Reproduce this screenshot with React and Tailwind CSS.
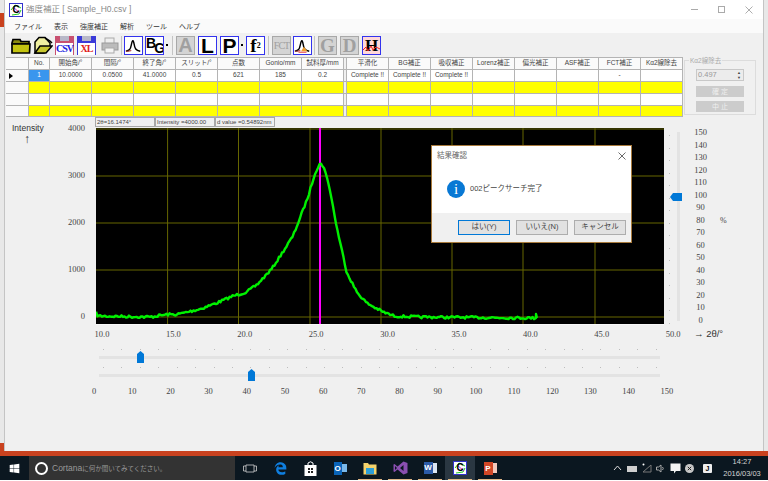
import React from "react";
import { FaWindows, FaEdgeLegacy } from "react-icons/fa";

const sans = "font-['Liberation_Sans','Noto_Sans_CJK_JP',sans-serif]";
const serif = "font-['Liberation_Serif',serif]";

const anchors = [[96,313],[98,316],[150,317],[166.7,314.5],[177,314.5],[200,309],[216.7,303],[233,296],[246.7,292],[256.7,285],[271.7,269],[283,251.7],[293,236],[300,218],[308,197],[315,173],[320,163.5],[324,167],[330,190],[336.7,227],[346.7,272],[356.7,292],[366.7,303],[383,312],[394,316],[417,317],[535,318]];
function curve() {
  const pts = [];
  let seed = 7;
  const rnd = () => { seed = (seed * 16807) % 2147483647; return seed / 2147483647 - 0.5; };
  for (let x = 96; x <= 535; x += 1.5) {
    let i = 0;
    while (i < anchors.length - 2 && anchors[i + 1][0] < x) i++;
    const [a, b] = [anchors[i], anchors[i + 1]];
    const y = a[1] + ((b[1] - a[1]) * (x - a[0])) / (b[0] - a[0]);
    pts.push(`${(x - 96).toFixed(1)},${(y - 128 + rnd() * 2.6).toFixed(1)}`);
  }
  pts.push("440,190", "440,186", "441,190");
  return pts.join(" ");
}
const curvePts = curve();

const headers = ["No.","開始角/°","間隔/°","終了角/°","スリット/°","点数","Gonio/mm","試料厚/mm","","平滑化","BG補正","吸収補正","Lorenz補正","偏光補正","ASF補正","FCT補正","Kα2線除去"];
const row1 = ["1","10.0000","0.0500","41.0000","0.5","621","185","0.2","","Complete !!","Complete !!","Complete !!","","","","-",""];

function Cell({ children, className = "" }) {
  return <div className={`border-r border-b border-[#b4b4b4] flex items-center justify-center text-[6.5px] leading-none whitespace-nowrap overflow-hidden text-[#444] ${className}`}>{children}</div>;
}

function Table() {
  const rows = [0, 1, 2, 3];
  return (
    <div className={`grid grid-cols-[23px_21px_repeat(7,42px)_3px_repeat(8,42px)] grid-rows-[12px_12px_12px_12px_11px] w-[677px] ml-px border-t border-[#b4b4b4] bg-white ${sans}`}>
      <Cell className="bg-[#fafafa]" />
      {headers.map((h, i) => <Cell key={i} className={i === 8 ? "bg-[#f0f0f0]" : "bg-[#fafafa]"}>{h}</Cell>)}
      {rows.map((r) => (
        <React.Fragment key={r}>
          <Cell className="bg-[#fafafa] justify-start pl-[3px]">
            {r === 0 && <span className="w-0 h-0 border-y-[3px] border-y-transparent border-l-[4px] border-l-black" />}
          </Cell>
          {headers.map((_, i) => {
            const yellow = r % 2 === 1;
            const sel = r === 0 && i === 0;
            return (
              <Cell key={i} className={i === 8 ? "bg-[#f0f0f0]" : sel ? "bg-[#3a96ee] text-white" : yellow ? "bg-[#ffff00]" : "bg-white"}>
                {r === 0 ? row1[i] : ""}
              </Cell>
            );
          })}
        </React.Fragment>
      ))}
    </div>
  );
}

function Folder({ open }) {
  return (
    <svg width="20" height="19" viewBox="0 0 20 19">
      {open ? (
        <g stroke="#000" strokeWidth="1.5" fill="#c8c830">
          <path d="M2 17 L2 6 L6 1.5 L12 1.5 L17 7 L17 10 L11 17 Z" fill="#f0f0a0" />
          <path d="M2 17 L7 10 L19 10 L13 17 Z" />
          <path d="M12 2 L17 5 L19 7" fill="none" />
        </g>
      ) : (
        <g stroke="#000" strokeWidth="1.7" fill="#c4c410">
          <path d="M1 7 L2 3.5 L9 3.5 L10 5.5 L18 5.5 L18 8 L1 8 Z" fill="#8a8a10" />
          <path d="M1 17 L1 8 L19 8 L18.5 17 Z" />
        </g>
      )}
    </svg>
  );
}

function Floppy({ bg, label, color }) {
  return (
    <div className={`relative w-[19px] h-[19px] ${bg} flex items-end justify-center overflow-hidden`}>
      <div className="absolute top-0 left-[5px] w-[9px] h-[5px] bg-[#b8b8c8]" />
      <div className="absolute bottom-0 left-px right-px h-[12px] bg-white" />
      <span className={`relative ${serif} font-bold text-[10px] leading-[12px] tracking-[-1px] ${color}`}>{label}</span>
    </div>
  );
}

function Peak({ color = "#000", accent }) {
  return (
    <svg width="19" height="19" viewBox="0 0 19 19" className="border border-[#3333ee] bg-white">
      <path d="M1 16 C5 15 6 14 7 9 C8 4 9 2 10 7 C11 13 12 15 17 16" fill="none" stroke={color} strokeWidth="1.6" />
      <path d="M1 16 C5 16 6 16 7 15" fill="none" stroke="#b04040" strokeWidth="1.2" />
      {accent && <path d="M8 16 L11 11 L15 16 Z" fill="#f0a030" />}
      {accent && <path d="M5 17 L14 17" stroke="#e02020" strokeWidth="1" />}
    </svg>
  );
}

function Big({ children, className = "" }) {
  return <div className={`w-[19px] h-[19px] border border-[#3333ee] bg-white flex items-center justify-center text-black font-bold ${className}`}><span className="block leading-[17px]">{children}</span></div>;
}
function Dim({ children, className = "" }) {
  return <div className={`w-[19px] h-[19px] border border-[#a8a8a8] bg-[#d4d4d4] flex items-center justify-center text-[#a0a0a0] font-bold ${className}`}><span className="block leading-[17px]">{children}</span></div>;
}
const Sep = ({ className = "" }) => <div className={`w-px h-[19px] bg-[#c4c4c4] ${className}`} />;

function Toolbar() {
  return (
    <div className={`h-[24px] flex items-center pl-[6px] ${sans}`}>
      <Folder />
      <div className="ml-[2px]"><Folder open /></div>
      <div className="ml-[2px]"><Floppy bg="bg-[#c85070]" label="CSV" color="text-[#2020e0]" /></div>
      <div className="ml-[3px]"><Floppy bg="bg-[#3a3ad8]" label="XL" color="text-[#e02020]" /></div>
      <svg width="18" height="17" viewBox="0 0 18 17" className="ml-[5px]">
        <rect x="4" y="1" width="9" height="6" fill="#eee" stroke="#aaa" />
        <rect x="1" y="6" width="16" height="7" fill="#bbb" stroke="#999" />
        <rect x="4" y="11" width="9" height="5" fill="#f4f4f4" stroke="#aaa" />
      </svg>
      <Sep className="ml-[2px]" />
      <div className="ml-[2px]"><Peak /></div>
      <div className="ml-[2px] w-[19px] h-[19px] border border-[#3333ee] bg-white overflow-hidden text-black font-bold text-[14px] leading-none tracking-[-2px] whitespace-nowrap">
        <span className="relative -top-px">B</span><span className="relative top-[4px]">G</span>
      </div>
      <div className="w-[2px] h-[2px] bg-black ml-[2px]" />
      <Sep className="ml-[4px]" />
      <Dim className="ml-[3px] text-[20px]">A</Dim>
      <Big className="ml-[3px] text-[21px]">L</Big>
      <Big className="ml-[3px] text-[21px]">P</Big>
      <div className="w-[2px] h-[2px] bg-black ml-[2px]" />
      <Big className={`ml-[3px] text-[19px] ${serif}`}>f<sup className="text-[8px]">2</sup></Big>
      <Sep className="ml-[3px]" />
      <Dim className={`ml-[3px] text-[10px] tracking-[-1px] ${serif} font-normal`}>FCT</Dim>
      <div className="ml-[2px]"><Peak accent /></div>
      <Sep className="ml-[2px]" />
      <Dim className={`ml-[3px] text-[19px] ${serif}`}>G</Dim>
      <Dim className={`ml-[3px] text-[19px] ${serif}`}>D</Dim>
      <div className={`ml-[3px] relative w-[19px] h-[19px] border border-[#3333ee] bg-[#ffd8d8] flex items-center justify-center text-[17px] font-bold text-black leading-none ${serif}`}>
        <span className="relative">H</span>
        <svg width="17" height="9" viewBox="0 0 17 9" className="absolute left-0 bottom-[1px]"><path d="M0 6 L3 3 L5 7 L8 2 L10 6 L13 3 L17 5" stroke="#f02020" fill="none" /></svg>
      </div>
    </div>
  );
}

function KaBox() {
  return (
    <div className={`relative ml-px mt-[3px] w-[72px] h-[55px] border border-[#dcdcdc] flex flex-col items-center pt-[8px] gap-[5px] ${sans}`}>
      <span className="absolute -top-[3px] left-[4px] px-px bg-[#f0f0f0] text-[6.5px] leading-none text-[#aaa] whitespace-nowrap">Kα2線除去</span>
      <div className="w-[48px] h-[12px] border border-[#c8c8c8] bg-[#ececec] flex items-center justify-between pl-[1px] pr-[2px] text-[7.5px] text-[#999]">
        <span>0.497</span>
        <span className="text-[4px] leading-[5px] text-[#444] text-center">▲<br />▼</span>
      </div>
      <div className="w-[48px] h-[11px] bg-[#cccccc] text-[#efefef] text-[7px] leading-[11px] text-center">確 定</div>
      <div className="w-[48px] h-[11px] mt-[-1px] bg-[#cccccc] text-[#efefef] text-[7px] leading-[11px] text-center">中 止</div>
    </div>
  );
}

function Plot() {
  const xs = [71.6, 142.5, 214, 285, 356, 427, 499];
  const ys = [1, 48, 95, 142, 189];
  return (
    <svg width="568" height="197" viewBox="0 0 568 197" className="bg-black shrink-0 block">
      {xs.map((x) => <line key={x} x1={x} x2={x} y1="0" y2="196" stroke="#666600" strokeWidth="1" />)}
      {ys.map((y) => <line key={y} y1={y} y2={y} x1="0" x2="568" stroke="#666600" strokeWidth="1" />)}
      <rect x="223" y="0" width="2" height="196" fill="#ff00ff" />
      <polyline points={curvePts} fill="none" stroke="#00f000" strokeWidth="2.4" strokeLinejoin="round" />
      <line x1="0" x2="568" y1="196.5" y2="196.5" stroke="#f8f8f8" />
    </svg>
  );
}

function VSlider() {
  const ticks = Array.from({ length: 16 });
  const labels = Array.from({ length: 16 }, (_, i) => 150 - i * 10);
  return (
    <div className={`relative flex h-[197px] text-[8.5px] leading-[10px] text-[#444] ${serif}`}>
      <div className="flex flex-col gap-[11.5px] pt-[7px] ml-[5px]">
        {ticks.map((_, i) => <div key={i} className="w-px h-px bg-[#bdbdbd]" />)}
      </div>
      <div className="w-[3px] h-[189px] mt-[4px] ml-[7px] bg-[#e3e3e3]" />
      <svg width="12" height="8" viewBox="0 0 12 8" className="absolute left-[6px] top-[65px]"><path d="M0 4 L3 0 L12 0 L12 8 L3 8 Z" fill="#0078d7" /></svg>
      <div className="flex flex-col gap-[2.53px] ml-[12.5px] -mt-px w-[16px] items-center">
        {labels.map((l) => <span key={l}>{l}</span>)}
      </div>
      <span className="absolute left-[56px] top-[88px] text-[8px]">%</span>
    </div>
  );
}

function HSlider({ thumb }) {
  const ticks = Array.from({ length: 31 });
  return (
    <div className="relative w-[561px] ml-[94px] h-[17px]">
      <div className="flex justify-between w-[554px] ml-[4px]">
        {ticks.map((_, i) => <div key={i} className="w-px h-px bg-[#bdbdbd]" />)}
      </div>
      <div className="h-[3px] mt-[6px] bg-[#e3e3e3]" />
      <svg width="7" height="12" viewBox="0 0 7 12" className="absolute top-[2px]" style={{ left: thumb }}><path d="M0 3 L3.5 0 L7 3 L7 12 L0 12 Z" fill="#0078d7" /></svg>
    </div>
  );
}

function Dialog() {
  return (
    <div className={`absolute left-[426px] top-[145px] w-[201px] h-[98px] border border-[#a87a3c] bg-white flex flex-col text-[#444] ${sans}`}>
      <div className="h-[20px] flex items-center justify-between pl-[5px] pr-[5px] text-[7.5px]">
        <span className="text-[#666]">結果確認</span>
        <svg width="8" height="8" viewBox="0 0 8 8"><path d="M0.5 0.5 L7.5 7.5 M7.5 0.5 L0.5 7.5" stroke="#444" strokeWidth="0.8" /></svg>
      </div>
      <div className="flex-1 flex items-start pl-[15px] pt-[14px] gap-[5px]">
        <div className={`w-[18px] h-[18px] rounded-full bg-[#0878d4] text-white flex items-center justify-center text-[15px] leading-none ${serif}`}>i</div>
        <span className="text-[7.5px] leading-[18px] whitespace-nowrap">002ピークサーチ完了</span>
      </div>
      <div className="h-[29px] bg-[#f0f0f0] flex items-center justify-end gap-[6px] pr-[5px] pb-[1px] text-[7.5px]">
        <button className="w-[52px] h-[15px] bg-[#e1e1e1] border border-[#0078d7]">はい(Y)</button>
        <button className="w-[52px] h-[15px] bg-[#e1e1e1] border border-[#adadad]">いいえ(N)</button>
        <button className="w-[52px] h-[15px] bg-[#e1e1e1] border border-[#adadad]">キャンセル</button>
      </div>
    </div>
  );
}

function AppIcon() {
  return (
    <div className="w-[14px] h-[14px] border border-[#3333cc] bg-white flex items-center justify-center text-[10px] font-bold leading-none text-black relative overflow-hidden">
      <svg width="12" height="12" viewBox="0 0 12 12" className="absolute"><path d="M1 6 L5 1 L11 4 M2 11 L9 10 L11 6" stroke="#22cc22" fill="none" /><path d="M3 3 L10 9" stroke="#e020c0" /></svg>
      <span className="relative">C</span>
    </div>
  );
}

function Task({ children, active, under }) {
  return (
    <div className={`relative w-[30px] h-[24px] flex items-center justify-center ${active ? "bg-[#2a3742]" : ""}`}>
      {children}
      {under && <div className={`absolute bottom-0 left-[3px] right-[3px] h-px bg-[#e0b888]`} />}
    </div>
  );
}

function Taskbar() {
  return (
    <div className={`h-[24px] bg-[#0b1720] flex items-center shrink-0 ${sans}`}>
      <div className="w-[29px] flex justify-center text-white"><FaWindows size={11} /></div>
      <div className="w-[206px] h-[24px] bg-[#333333] flex items-center pl-[6px] gap-[4px]">
        <div className="w-[13px] h-[13px] rounded-full border-2 border-white" />
        <span className="text-[6.5px] text-[#9a9a9a] whitespace-nowrap"><span className="text-[8.5px]">Cortana</span>に何か聞いてみてください。</span>
      </div>
      <Task><svg width="14" height="9" viewBox="0 0 14 9"><path d="M3 1 H11 V8 H3 Z M3 2 H0.5 V7 H3 M11 2 H13.5 V7 H11" fill="none" stroke="#cfcfcf" strokeWidth="0.8" /></svg></Task>
      <Task><span className="text-[#0f7fe0]"><FaEdgeLegacy size={13} /></span></Task>
      <Task><svg width="13" height="15" viewBox="0 0 13 15"><path d="M4 4 V2 Q6.5 -0.5 9 2 V4" fill="none" stroke="#fff" /><rect x="0.5" y="4" width="12" height="11" fill="#fff" /><path d="M4 7 H6 V9 H4 Z M7 7 H9 V9 H7 Z M4 10 H6 V12 H4 Z M7 10 H9 V12 H7 Z" fill="#222" /></svg></Task>
      <Task>
        <div className="flex items-center">
          <div className="w-[8px] h-[13px] bg-[#0a64b8] text-white text-[8px] font-bold leading-[13px] text-center">O</div>
          <div className="w-[5px] h-[8px] bg-[#7ab8ea]" />
        </div>
      </Task>
      <Task under><svg width="14" height="13" viewBox="0 0 14 13"><path d="M0.5 1 H5 L6 2.5 H13.5 V12.5 H0.5 Z" fill="#f5d36c" /><rect x="3" y="6" width="8" height="6" fill="#2d9fd8" /></svg></Task>
      <Task under><svg width="15" height="14" viewBox="0 0 15 14"><path d="M10.5 0.5 L14.5 2 V12 L10.5 13.5 L4.5 8.5 L1.5 11 L0.5 10.5 V3.5 L1.5 3 L4.5 5.5 Z M10.5 4 L7 7 L10.5 10 Z M2 5 V9 L4 7 Z" fill="#8a4fb0" fillRule="evenodd" /></svg></Task>
      <Task under>
        <div className="flex items-center">
          <div className="w-[9px] h-[12px] bg-[#2b5ba8] text-white text-[8px] font-bold leading-[12px] text-center">W</div>
          <div className="w-[4px] h-[10px] bg-[#dce6f2]" />
        </div>
      </Task>
      <Task active under><AppIcon /></Task>
      <Task under>
        <div className="flex items-center">
          <div className="w-[9px] h-[13px] bg-[#d24726] text-white text-[8px] font-bold leading-[13px] text-center">P</div>
          <div className="w-[4px] h-[10px] bg-[#f3c9bc]" />
        </div>
      </Task>
      <div className="ml-auto flex items-center h-full pr-[7px]">
        <svg width="9" height="6" viewBox="0 0 9 6"><path d="M1 5 L4.5 1 L8 5" fill="none" stroke="#ddd" /></svg>
        <svg width="11" height="7" viewBox="0 0 11 7" className="ml-[5px]"><rect x="0" y="1" width="10" height="6" fill="#cfcfcf" /></svg>
        <svg width="10" height="10" viewBox="0 0 10 10" className="ml-[4px]"><path d="M1 9 L9 9 L9 2 Z" fill="none" stroke="#777" /><circle cx="1.5" cy="1.5" r="1" fill="#fff" /></svg>
        <svg width="9" height="9" viewBox="0 0 9 9" className="ml-[4px]"><path d="M0.5 3 H2.5 L5 1 V8 L2.5 6 H0.5 Z" fill="none" stroke="#aaa" /><path d="M6.5 3 Q8 4.5 6.5 6" fill="none" stroke="#aaa" /></svg>
        <svg width="11" height="11" viewBox="0 0 11 11" className="ml-[5px]"><path d="M0.5 0.5 H10.5 V8 H6 L4 10.5 V8 H0.5 Z" fill="#f4f4f4" /></svg>
        <svg width="9" height="9" viewBox="0 0 9 9" className="ml-[4px]"><circle cx="4.5" cy="4.5" r="4.5" fill="#c8c8c8" /><path d="M2.8 2.8 L6.2 6.2 M6.2 2.8 L2.8 6.2" stroke="#222" strokeWidth="1" /></svg>
        <div className="ml-[9px] w-[9px] h-[9px] bg-[#eee] rounded-[1px] text-black text-[7px] font-bold leading-[9px] text-center">J</div>
        <div className="ml-[11px] w-[38px] text-center text-[7.5px] leading-[12px] text-[#d4d4d4] whitespace-nowrap">
          <div>14:27</div>
          <div>2016/03/03</div>
        </div>
      </div>
    </div>
  );
}

export default function App() {
  const xLabels = ["10.0","15.0","20.0","25.0","30.0","35.0","40.0","45.0","50.0"];
  const yLabels = ["4000","3000","2000","1000","0"];
  const bLabels = Array.from({ length: 16 }, (_, i) => i * 10);
  return (
    <div className={`relative w-[768px] h-[481px] overflow-hidden bg-[#e8e8e8] flex flex-col ${sans}`}>
      <div className="absolute left-0 top-[13px] w-[5px] h-[14px] bg-[#c9421f]" />
      <div className="absolute left-0 top-[443px] w-[5px] h-[13px] bg-[#c9421f]" />
      <div className="h-[451px] shrink-0 ml-[4px] w-[760px] border-x border-[#c4c4c4] relative z-10 bg-[#f0f0f0] flex flex-col">
        <div className="h-[19px] bg-white flex items-center pl-[4px] shrink-0">
          <AppIcon />
          <span className="ml-[3px] text-[8.5px] text-[#8a8a8a] whitespace-nowrap">強度補正 [ Sample_H0.csv ]</span>
          <div className="ml-auto flex items-center gap-[20px] pr-[10px]">
            <div className="w-[7px] h-px bg-[#aaa]" />
            <div className="w-[7px] h-[7px] border border-[#aaa]" />
            <svg width="8" height="8" viewBox="0 0 8 8"><path d="M0.5 0.5 L7.5 7.5 M7.5 0.5 L0.5 7.5" stroke="#999" strokeWidth="0.8" /></svg>
          </div>
        </div>
        <div className="h-[14px] bg-[#fafafa] flex items-center pl-[9px] gap-[12px] text-[7px] leading-none text-[#333] shrink-0">
          <span>ファイル</span><span>表示</span><span>強度補正</span><span>解析</span><span>ツール</span><span>ヘルプ</span>
        </div>
        <Toolbar />
        <div className="flex h-[59px] shrink-0">
          <Table />
          <KaBox />
        </div>
        <div className="flex h-[12px] pl-[90px] pt-px shrink-0">
          {["2θ=16.1474°","Intensity =4000.00","d value =0.54892nm"].map((t) => (
            <div key={t} className="w-[60px] h-[10px] border border-[#a8a8a8] text-[6px] leading-[8px] pl-[1px] text-[#444] whitespace-nowrap overflow-hidden">{t}</div>
          ))}
        </div>
        <div className="flex h-[197px] shrink-0">
          <div className="w-[91px] flex shrink-0">
            <div className="w-[60px] pl-[7px] flex flex-col items-start text-[8.5px] leading-[10px] text-[#333] -mt-[5px]">
              <span>Intensity</span>
              <span className="pl-[12px] text-[12px] mt-[1px]">↑</span>
            </div>
            <div className={`w-[20px] flex flex-col items-end gap-[37px] -mt-[5px] text-[8.5px] leading-[10px] text-[#444] ${serif}`}>
              {yLabels.map((l) => <span key={l}>{l}</span>)}
            </div>
          </div>
          <Plot />
          <VSlider />
        </div>
        <div className={`flex items-center gap-[56.4px] mt-[4px] pl-[89.5px] h-[10px] text-[8.5px] leading-none text-[#444] shrink-0 ${serif}`}>
          {xLabels.map((l) => <span key={l} className="w-[15px] text-center">{l}</span>)}
          <span className={`-ml-[43px] text-[9.5px] text-[#333] whitespace-nowrap ${sans}`}>→ 2θ/°</span>
        </div>
        <div className="mt-[10px] flex flex-col gap-px shrink-0">
          <HSlider thumb={38} />
          <HSlider thumb={149} />
        </div>
        <div className={`flex gap-[22.2px] pl-[81px] mt-[2px] text-[8.5px] leading-[10px] text-[#444] shrink-0 ${serif}`}>
          {bLabels.map((l) => <span key={l} className="w-[16px] text-center">{l}</span>)}
        </div>
        <Dialog />
      </div>
      <div className="h-[5px] bg-[#c9421f] shrink-0" />
      <Taskbar />
      <div className="h-px bg-white shrink-0" />
    </div>
  );
}
